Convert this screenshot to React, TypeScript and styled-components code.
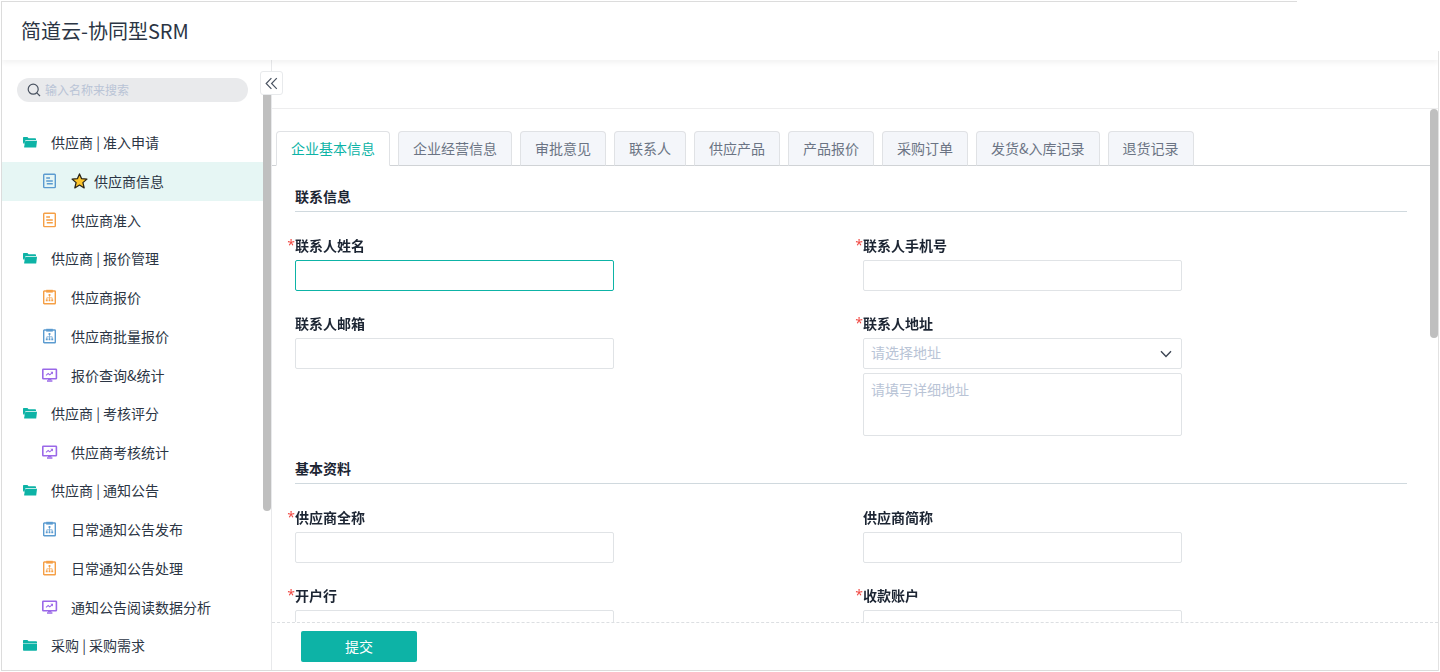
import React from "react";
import styled, { createGlobalStyle, css } from "styled-components";

const TEAL = "#0db3a6";
const LINE = "#e0e3e6";

const GlobalStyle = createGlobalStyle`
  *, *::before, *::after { box-sizing: border-box; }
  body { margin: 0; background: #fff; }
  body, button, input, select, textarea {
    font-family: "Noto Sans CJK SC", "Noto Sans", sans-serif;
    font-size: 14px;
    line-height: 20px;
    color: #2b3544;
  }
`;

const Frame = styled.div`
  display: flex;
  flex-direction: column;
  height: 100vh;
  min-height: 480px;
  padding: 2px;
  overflow: hidden;
  background:
    linear-gradient(#dcdcdc, #dcdcdc) 1px 1px / calc(100% - 144px) 1px no-repeat,
    linear-gradient(#dcdcdc, #dcdcdc) 1px 1px / 1px calc(100% - 2px) no-repeat,
    linear-gradient(#e2e2e2, #e2e2e2) calc(100% - 1px) 51px / 1px calc(100% - 52px) no-repeat,
    linear-gradient(#dcdcdc, #dcdcdc) 1px calc(100% - 1px) / calc(100% - 2px) 1px no-repeat;
`;

const Header = styled.header`
  flex: none;
  display: flex;
  align-items: center;
  height: 58px;
  padding: 0 19px;
  position: relative;
  z-index: 1;
  clip-path: inset(0 0 -10px 0);
  box-shadow: 0 3px 5px rgba(0, 0, 0, 0.05);
`;

const Title = styled.h1`
  margin: 0;
  font-size: 20px;
  line-height: 28px;
  font-weight: 400;
`;

const Body = styled.div`
  flex: 1;
  display: flex;
  min-height: 0;
`;

const Sidebar = styled.aside`
  flex: none;
  position: relative;
  display: flex;
  width: 270px;
  border-right: 1px solid #e8e9eb;
`;

const SidebarContent = styled.div`
  flex: 1;
  min-width: 0;
  overflow: hidden;
  padding-top: 18px;
`;

const SearchBox = styled.label`
  display: flex;
  align-items: center;
  gap: 4px;
  height: 24px;
  margin: 0 15px 22px;
  padding: 0 10px;
  border-radius: 12px;
  background: #e9eaec;
`;

const SearchInput = styled.input`
  flex: 1;
  min-width: 0;
  padding: 0;
  border: 0;
  outline: 0;
  background: transparent;
  font-size: 12px;
  &::placeholder { color: #b9c4d6; opacity: 1; }
`;

const Menu = styled.ul`
  margin: 0;
  padding: 0;
  list-style: none;
`;

const MenuLink = styled.a<{ $group?: boolean; $active?: boolean }>`
  display: flex;
  align-items: center;
  gap: 13px;
  height: 39px;
  padding-left: 39px;
  color: #2b3544;
  text-decoration: none;
  white-space: nowrap;
  ${(p) => p.$group && css`height: 38px; padding-left: 20px;`}
  ${(p) => p.$active && css`background: #e6f6f4;`}
`;

const MenuText = styled.span`
  display: flex;
  align-items: center;
  gap: 6px;
  padding-bottom: 2px;
`;

const SideTrack = styled.div`
  flex: none;
  width: 8px;
  padding-top: 34px;
`;

const SideThumb = styled.div`
  height: 417px;
  border-radius: 0 0 4px 4px;
  background: #bfbfbf;
`;

const CollapseButton = styled.button`
  position: absolute;
  top: 11px;
  right: -12px;
  z-index: 2;
  display: flex;
  align-items: center;
  justify-content: center;
  width: 23px;
  height: 24px;
  padding: 0;
  border: 1px solid #e8eaec;
  border-radius: 3px;
  background: #fff;
`;

const Main = styled.main`
  flex: 1;
  display: flex;
  flex-direction: column;
  min-width: 0;
`;

const Toolbar = styled.div`
  flex: none;
  height: 49px;
  border-bottom: 1px solid #ededee;
`;

const ScrollArea = styled.div`
  flex: 1;
  display: flex;
  min-height: 0;
`;

const FormPane = styled.div`
  flex: 1;
  min-width: 0;
  overflow: auto;
  scrollbar-width: none;
`;

const MainTrack = styled.div`
  flex: none;
  width: 8px;
`;

const MainThumb = styled.div`
  height: 229px;
  border-radius: 4px;
  background: #bfbfbf;
`;

const Tabs = styled.div`
  display: flex;
  gap: 8px;
  height: 57px;
  padding: 22px 4px 0;
  border-bottom: 1px solid #d0d3d6;
`;

const Tab = styled.button<{ $active?: boolean }>`
  flex: none;
  height: 35px;
  padding: 0 14px 2px;
  border: 1px solid #e0e2e5;
  border-bottom-color: #d0d3d6;
  border-radius: 4px 4px 0 0;
  background: #f4f6fa;
  color: #6b7484;
  white-space: nowrap;
  ${(p) => p.$active && css`
    background: #fff;
    border-bottom-color: #fff;
    color: ${TEAL};
  `}
`;

const Form = styled.form`
  display: flex;
  flex-direction: column;
  gap: 23px;
  padding: 21px 23px 40px;
`;

const Section = styled.section`
  display: flex;
  flex-direction: column;
  gap: 23px;
`;

const SectionTitle = styled.h2`
  margin: 0;
  padding-bottom: 6px;
  border-bottom: 1px solid #d0d9de;
  font-size: 14px;
  line-height: 18px;
  font-weight: 700;
  color: #1c2533;
`;

const Fields = styled.div`
  display: grid;
  grid-template-columns: 1fr 1fr;
  gap: 22px 24px;
  align-items: start;
`;

const Field = styled.div`
  display: flex;
  flex-direction: column;
  max-width: 319px;
`;

const Label = styled.label`
  position: relative;
  margin-bottom: 5px;
  font-weight: 700;
  color: #1c2533;
`;

const Star = styled.span`
  position: absolute;
  right: 100%;
  font-family: "Open Sans", sans-serif;
  font-weight: 400;
  color: #f0443e;
`;

const control = css`
  width: 100%;
  border: 1px solid ${LINE};
  border-radius: 2px;
  outline: 0;
  background: #fff;
`;

const TextInput = styled.input`
  ${control}
  height: 31px;
  padding: 0 8px;
  &:focus { border-color: ${TEAL}; }
`;

const SelectWrap = styled.div`
  position: relative;
  margin-bottom: 4px;
`;

const Select = styled.select`
  ${control}
  display: block;
  height: 31px;
  padding: 0 8px 3px 7px;
  appearance: none;
  color: #b9c4d6;
`;

const SelectArrow = styled.svg`
  position: absolute;
  top: 12px;
  right: 10px;
  pointer-events: none;
`;

const TextArea = styled.textarea`
  ${control}
  display: block;
  height: 63px;
  padding: 5px 7px;
  resize: none;
  &::placeholder { color: #b9c4d6; opacity: 1; }
`;

const Footer = styled.footer`
  flex: none;
  display: flex;
  align-items: center;
  height: 48px;
  padding: 0 29px;
  border-top: 1px dashed #dcdfe2;
`;

const Submit = styled.button`
  width: 116px;
  height: 31px;
  padding: 0 0 2px;
  border: 0;
  border-radius: 2px;
  background: ${TEAL};
  color: #fff;
`;

const BLUE = "#5b9bd0";
const ORANGE = "#f59f45";
const PURPLE = "#9a68e8";

type IconKind = "open" | "folder" | "doc" | "board" | "chart";

const GroupGlyph = styled.svg`
  flex: none;
  width: 16px;
  height: 14px;
`;

const ItemGlyph = styled.svg`
  flex: none;
  width: 17px;
  height: 17px;
`;

function MenuIcon({ kind, color }: { kind: IconKind; color: string }) {
  if (kind === "open")
    return (
      <GroupGlyph viewBox="0 0 16 14" fill={color} aria-hidden="true">
        <path d="M1 1.7Q1 1 1.7 1H5.4L6.6 2.2H13.2Q14 2.2 14 3V3.9H3.6L2.2 8.5L1 6.5Z" />
        <path d="M4 4.7H15L14.2 11.5H2.6Q2 11.5 2.1 10.9L3.2 5.3Q3.4 4.7 4 4.7Z" />
      </GroupGlyph>
    );
  if (kind === "folder")
    return (
      <GroupGlyph viewBox="0 0 16 14" fill={color} aria-hidden="true">
        <path d="M1 1.7Q1 1 1.7 1H5.4L6.6 2.2H14.2Q15 2.2 15 3V3.9H1Z" />
        <path d="M1 4.6H15V10.9Q15 11.7 14.2 11.7H1.8Q1 11.7 1 10.9Z" />
      </GroupGlyph>
    );
  if (kind === "doc")
    return (
      <ItemGlyph viewBox="0 0 17 17" fill="none" stroke={color} strokeWidth="1.4" aria-hidden="true">
        <rect x="2.7" y="1.2" width="11.6" height="13.4" rx="0.8" />
        <path d="M5.2 5H9M5.2 7.9H11.8M5.8 10.8H11.8" strokeWidth="1.5" />
      </ItemGlyph>
    );
  if (kind === "board")
    return (
      <ItemGlyph viewBox="0 0 17 17" fill="none" stroke={color} strokeWidth="1.4" aria-hidden="true">
        <rect x="2.7" y="2" width="11.6" height="12.8" rx="0.6" />
        <path d="M5.2 0.8H11.8V3.6H5.2Z" fill={color} stroke="none" />
        <path d="M8.5 6V8.6M5.8 11V8.8H11.2V11M8.5 8.8V11" strokeWidth="0.7" />
        <path d="M7.6 5H9.4V6.9H7.6ZM4.8 10.5H6.7V12.3H4.8ZM7.6 10.5H9.4V12.3H7.6ZM10.3 10.5H12.2V12.3H10.3Z" fill={color} stroke="none" />
      </ItemGlyph>
    );
  return (
    <ItemGlyph viewBox="0 0 17 17" fill="none" stroke={color} strokeWidth="1.6" aria-hidden="true">
      <rect x="1.8" y="2.2" width="13.6" height="9.6" rx="0.6" />
      <path d="M5 8.4L7.2 6.4L8.8 7.8L11 5.8" strokeWidth="1.1" />
      <path d="M9.4 4.8H12V7.4Z" fill={color} stroke="none" />
      <path d="M7 12.2H10.4M6 14H11.4" strokeWidth="1.4" />
    </ItemGlyph>
  );
}

interface MenuEntry {
  text: string;
  icon: IconKind;
  color: string;
  active?: boolean;
}

const MENU: MenuEntry[] = [
  { text: "供应商 | 准入申请", icon: "open", color: TEAL },
  { text: "供应商信息", icon: "doc", color: BLUE, active: true },
  { text: "供应商准入", icon: "doc", color: ORANGE },
  { text: "供应商 | 报价管理", icon: "open", color: TEAL },
  { text: "供应商报价", icon: "board", color: ORANGE },
  { text: "供应商批量报价", icon: "board", color: BLUE },
  { text: "报价查询&统计", icon: "chart", color: PURPLE },
  { text: "供应商 | 考核评分", icon: "open", color: TEAL },
  { text: "供应商考核统计", icon: "chart", color: PURPLE },
  { text: "供应商 | 通知公告", icon: "open", color: TEAL },
  { text: "日常通知公告发布", icon: "board", color: BLUE },
  { text: "日常通知公告处理", icon: "board", color: ORANGE },
  { text: "通知公告阅读数据分析", icon: "chart", color: PURPLE },
  { text: "采购 | 采购需求", icon: "folder", color: TEAL },
];

const TABS = ["企业基本信息", "企业经营信息", "审批意见", "联系人", "供应产品", "产品报价", "采购订单", "发货&入库记录", "退货记录"];

function FieldLabel({ id, text, required }: { id: string; text: string; required?: boolean }) {
  return (
    <Label htmlFor={id}>
      {required && <Star>*</Star>}
      {text}
    </Label>
  );
}

function TextField({ id, text, required, autoFocus }: { id: string; text: string; required?: boolean; autoFocus?: boolean }) {
  return (
    <Field>
      <FieldLabel id={id} text={text} required={required} />
      <TextInput id={id} type="text" autoFocus={autoFocus} />
    </Field>
  );
}

export default function App() {
  return (
    <Frame>
      <GlobalStyle />
      <Header>
        <Title>简道云-协同型SRM</Title>
      </Header>
      <Body>
        <Sidebar>
          <SidebarContent>
            <SearchBox>
              <svg width="14" height="14" viewBox="0 0 14 14" fill="none" stroke="#4a5361" strokeWidth="1.2" aria-hidden="true">
                <circle cx="6.2" cy="6.2" r="5" />
                <path d="M9.8 9.8L13 13" />
              </svg>
              <SearchInput type="text" placeholder="输入名称来搜索" aria-label="输入名称来搜索" />
            </SearchBox>
            <nav>
              <Menu>
                {MENU.map((m) => (
                  <li key={m.text}>
                    <MenuLink href="#" $group={m.color === TEAL} $active={m.active}>
                      <MenuIcon kind={m.icon} color={m.color} />
                      <MenuText>
                        {m.active && (
                          <svg width="17" height="17" viewBox="0 0 16 16" fill="#fcc52c" stroke="#2a2418" strokeWidth="1.2" strokeLinejoin="round" aria-hidden="true">
                            <path d="M8 1.8L10 6.3L15 6.7L11.2 10L12.4 15L8 12.3L3.6 15L4.8 10L1 6.7L6 6.3Z" />
                          </svg>
                        )}
                        {m.text}
                      </MenuText>
                    </MenuLink>
                  </li>
                ))}
              </Menu>
            </nav>
          </SidebarContent>
          <SideTrack>
            <SideThumb />
          </SideTrack>
          <CollapseButton type="button" aria-label="收起">
            <svg width="13" height="13" viewBox="0 0 13 13" fill="none" stroke="#4a5361" strokeWidth="1.2" aria-hidden="true">
              <path d="M6.4 1.2L1.2 6.5L6.4 11.8M11.8 1.2L6.6 6.5L11.8 11.8" />
            </svg>
          </CollapseButton>
        </Sidebar>
        <Main>
          <Toolbar />
          <ScrollArea>
            <FormPane>
              <Tabs role="tablist">
                {TABS.map((t, i) => (
                  <Tab key={t} type="button" role="tab" aria-selected={i === 0} $active={i === 0}>
                    {t}
                  </Tab>
                ))}
              </Tabs>
              <Form id="supplier">
                <Section>
                  <SectionTitle>联系信息</SectionTitle>
                  <Fields>
                    <TextField id="name" text="联系人姓名" required autoFocus />
                    <TextField id="phone" text="联系人手机号" required />
                    <TextField id="mail" text="联系人邮箱" />
                    <Field>
                      <FieldLabel id="region" text="联系人地址" required />
                      <SelectWrap>
                        <Select id="region" defaultValue="">
                          <option value="">请选择地址</option>
                        </Select>
                        <SelectArrow width="12" height="8" viewBox="0 0 12 8" fill="none" stroke="#3c4553" strokeWidth="1.4" aria-hidden="true">
                          <path d="M1 1.2L6 6.4L11 1.2" />
                        </SelectArrow>
                      </SelectWrap>
                      <TextArea placeholder="请填写详细地址" aria-label="请填写详细地址" />
                    </Field>
                  </Fields>
                </Section>
                <Section>
                  <SectionTitle>基本资料</SectionTitle>
                  <Fields>
                    <TextField id="full" text="供应商全称" required />
                    <TextField id="short" text="供应商简称" />
                    <TextField id="bank" text="开户行" required />
                    <TextField id="account" text="收款账户" required />
                  </Fields>
                </Section>
              </Form>
            </FormPane>
            <MainTrack>
              <MainThumb />
            </MainTrack>
          </ScrollArea>
          <Footer>
            <Submit type="submit" form="supplier">提交</Submit>
          </Footer>
        </Main>
      </Body>
    </Frame>
  );
}
